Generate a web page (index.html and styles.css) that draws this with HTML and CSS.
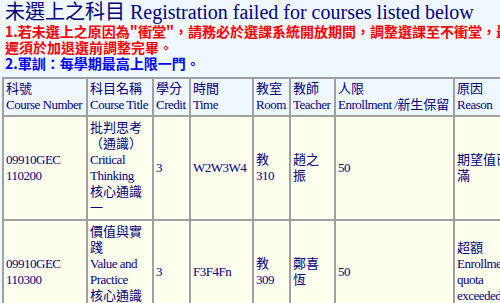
FILE: index.html
```html
<!DOCTYPE html>
<html lang="zh-Hant">
<head>
<meta charset="utf-8">
<title>未選上之科目</title>
<link rel="stylesheet" href="styles.css">
</head>
<body>
<div class="page">
  <h1 class="title">未選上之科目 Registration failed for courses listed below</h1>
  <div class="notice">
    <p class="warn">1.若未選上之原因為"衝堂"，請務必於選課系統開放期間，調整選課至不衝堂，最遲須於加退選前調整完畢。</p>
    <p class="info">2.軍訓：每學期最高上限一門。</p>
  </div>
  <table class="courses">
    <thead>
      <tr>
        <th class="c-num">科號<br><span class="en">Course Number</span></th>
        <th class="c-title">科目名稱<br><span class="en">Course Title</span></th>
        <th class="c-credit">學分<br><span class="en">Credit</span></th>
        <th class="c-time">時間<br><span class="en">Time</span></th>
        <th class="c-room">教室<br><span class="en">Room</span></th>
        <th class="c-teacher">教師<br><span class="en">Teacher</span></th>
        <th class="c-limit">人限<br><span class="en">Enrollment /</span>新生保留</th>
        <th class="c-reason">原因<br><span class="en">Reason</span></th>
      </tr>
    </thead>
    <tbody>
      <tr>
        <td><span class="en">09910GEC 110200</span></td>
        <td>批判思考（通識）<br><span class="en">Critical Thinking</span><br>核心通識一</td>
        <td><span class="en">3</span></td>
        <td><span class="en">W2W3W4</span></td>
        <td>教 <span class="en">310</span></td>
        <td>趙之振</td>
        <td><span class="en">50</span></td>
        <td>期望值已滿</td>
      </tr>
      <tr>
        <td><span class="en">09910GEC 110300</span></td>
        <td>價值與實踐<br><span class="en">Value and Practice</span><br>核心通識一</td>
        <td><span class="en">3</span></td>
        <td><span class="en">F3F4Fn</span></td>
        <td>教 <span class="en">309</span></td>
        <td>鄭喜恆</td>
        <td><span class="en">50</span></td>
        <td>超額<br><span class="en">Enrollment quota exceeded</span></td>
      </tr>
    </tbody>
  </table>
</div>
</body>
</html>
```

FILE: styles.css
```css
html {
  overflow: hidden;
  background: #f0f8ff;
}

body {
  margin: 0;
  padding: 0 0 0 2px;
  background: #f0f8ff;
}

.page {
  width: 520px;
}

.title {
  margin: 0 0 0 3px;
  font: normal 20px/24px "Liberation Serif", "Noto Sans CJK TC", serif;
  color: #000080;
}

.notice {
  margin: -1px 0 0 3px;
  width: 507px;
  font: bold 14px/16px "Noto Sans CJK TC", sans-serif;
}

.notice p {
  margin: 0;
}

.warn {
  color: #ff0000;
}

.info {
  color: #0000ff;
}

.courses {
  margin-top: 6px;
  table-layout: fixed;
  width: 516px;
  border-collapse: separate;
  border-spacing: 0;
  border: 1px solid #a0a0a0;
  font: 13px/16px "Liberation Serif", "Noto Sans CJK TC", serif;
  color: #000080;
}

.courses th,
.courses td {
  box-sizing: border-box;
  border: 1px solid #a0a0a0;
  text-align: left;
  font-weight: normal;
  vertical-align: middle;
}

.courses th {
  background: #f0f8ff;
  padding: 2px 3px 2px 2px;
  white-space: nowrap;
  vertical-align: top;
}

.courses td {
  background: #ffffee;
  padding: 3px 3px 3px 2px;
}

.en {
  font-size: 13px;
  letter-spacing: -0.5px;
}

.c-num { width: 84px; }
.c-title { width: 66px; }
.c-credit { width: 37px; }
.c-time { width: 63px; }
.c-room { width: 37px; }
.c-teacher { width: 45px; }
.c-limit { width: 119px; }
.c-reason { width: 63px; }
```
